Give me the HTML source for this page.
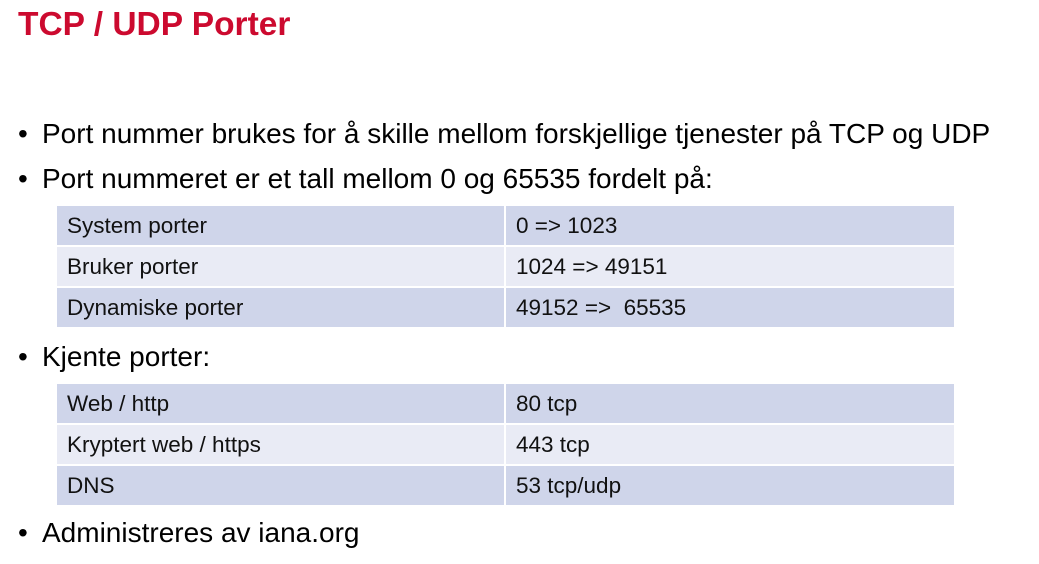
<!DOCTYPE html>
<html><head><meta charset="utf-8"><style>
body{margin:0;width:1039px;height:564px;background:#fff;position:relative;overflow:hidden;font-family:"Liberation Sans",Arial,sans-serif;}
*{box-sizing:border-box}
.t{position:absolute;left:18px;top:6px;font-size:33.5px;font-weight:bold;color:#cc0a2f;}
.b{position:absolute;left:18px;font-size:28px;color:#000;white-space:nowrap;}
.b span{position:absolute;left:24px;}
.tb{position:absolute;left:57px;width:897px;}
.r{position:absolute;left:0;width:897px;height:39px;font-size:22.5px;color:#111;}
.r div{position:absolute;top:0;height:39px;line-height:39px;}
.c1{left:0;width:447px;padding-left:10px;}
.c2{left:449px;width:448px;padding-left:10px;}
.d div{background:#cfd5ea}.l div{background:#e9ebf5}
</style></head><body>
<div class="t">TCP / UDP Porter</div>
<div class="b" style="top:118px">•<span>Port nummer brukes for å skille mellom forskjellige tjenester på TCP og UDP</span></div>
<div class="b" style="top:163px">•<span>Port nummeret er et tall mellom 0 og 65535 fordelt på:</span></div>
<div class="tb" style="top:206px">
<div class="r d" style="top:0"><div class="c1">System porter</div><div class="c2">0 =&gt; 1023</div></div>
<div class="r l" style="top:41px"><div class="c1">Bruker porter</div><div class="c2">1024 =&gt; 49151</div></div>
<div class="r d" style="top:82px"><div class="c1">Dynamiske porter</div><div class="c2">49152 =&gt;&nbsp; 65535</div></div>
</div>
<div class="b" style="top:341px">•<span>Kjente porter:</span></div>
<div class="tb" style="top:384px">
<div class="r d" style="top:0"><div class="c1">Web / http</div><div class="c2">80 tcp</div></div>
<div class="r l" style="top:41px"><div class="c1">Kryptert web / https</div><div class="c2">443 tcp</div></div>
<div class="r d" style="top:82px"><div class="c1">DNS</div><div class="c2">53 tcp/udp</div></div>
</div>
<div class="b" style="top:517px">•<span>Administreres av iana.org</span></div>
</body></html>
